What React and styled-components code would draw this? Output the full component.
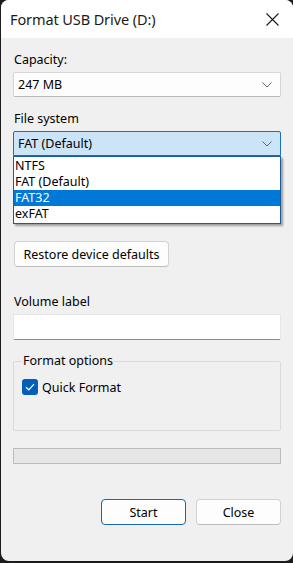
import React from "react";
import styled, { createGlobalStyle } from "styled-components";

const Global = createGlobalStyle`
  html, body { margin: 0; padding: 0; background: #202020; }
  body { font-family: "Noto Sans", "Segoe UI", sans-serif; font-size: 12.5px; color: #000; }
  * { box-sizing: border-box; }
`;

const Screen = styled.div`
  width: 293px;
  height: 563px;
  padding: 0 0 2px 1px;
  background: #1c1c1c;
  overflow: hidden;
`;

const Window = styled.div`
  width: 292px;
  height: 561px;
  background: #f0f0f0;
  border-radius: 8px;
  overflow: hidden;
  display: flex;
  flex-direction: column;
`;

const TitleBar = styled.div`
  height: 38px;
  flex: none;
  background: #fff;
  display: flex;
  align-items: center;
  justify-content: space-between;
  padding: 0 14px 0 9px;
`;

const Title = styled.div`
  font-size: 14.5px;
  letter-spacing: -0.1px;
  color: #1a1a1a;
`;

const Body = styled.div`
  flex: 1;
  display: flex;
  flex-direction: column;
  padding: 13px 12px 0 12px;
`;

const Label = styled.div`
  height: 18px;
  line-height: 18px;
  margin-bottom: ${(p) => p.$mb || 4}px;
  padding-left: 1px;
`;

const ComboWrap = styled.div`
  position: relative;
  margin-bottom: ${(p) => p.$mb || 0}px;
`;

const Combo = styled.div`
  height: 25px;
  display: flex;
  align-items: center;
  justify-content: space-between;
  padding: 0 8px 0 4px;
  background: ${(p) => (p.$active ? "#cce4f7" : "#fdfdfd")};
  border: 1px solid ${(p) => (p.$active ? "#1a6fba" : "#d6d6d6")};
  border-bottom-color: ${(p) => (p.$active ? "#1a6fba" : "#b8b8b8")};
  border-radius: ${(p) => (p.$active ? "2px 2px 0 0" : "2px")};
`;

const List = styled.div`
  position: absolute;
  left: 0;
  right: 0;
  top: 100%;
  background: #fff;
  border: 1px solid #1a5d9c;
  box-shadow: 2px 2px 2px rgba(0, 0, 0, 0.35);
  padding: 1px 0;
  z-index: 2;
`;

const Item = styled.div`
  height: 16px;
  line-height: 16px;
  padding-left: 1px;
  background: ${(p) => (p.$selected ? "#0078d7" : "transparent")};
  color: ${(p) => (p.$selected ? "#fff" : "#000")};
`;

const Button = styled.button`
  font: inherit;
  height: 26px;
  width: ${(p) => p.$w}px;
  background: #fdfdfd;
  border: 1px solid ${(p) => (p.$primary ? "#1667b4" : "#d2d2d2")};
  border-bottom-color: ${(p) => (p.$primary ? "#1667b4" : "#bdbdbd")};
  border-radius: 4px;
  color: #000;
  padding: 0;
`;

const RestoreRow = styled.div`
  display: flex;
  padding-left: 1px;
  margin-top: 85px;
  margin-bottom: 26px;
`;

const Input = styled.div`
  height: 26px;
  background: #fff;
  border: 1px solid #e6e6e6;
  border-bottom: 1px solid #8a8a8a;
  border-radius: 2px;
  margin-bottom: 13px;
`;

const Group = styled.fieldset`
  margin: 0;
  padding: 10px 8px 0 8px;
  height: 78px;
  border: 1px solid #dadada;
  border-radius: 2px;
`;

const Legend = styled.legend`
  padding: 0 1px;
  margin-left: 0;
  line-height: 16px;
`;

const CheckRow = styled.div`
  display: flex;
  align-items: center;
  gap: 4px;
  height: 16px;
`;

const CheckBox = styled.span`
  width: 16px;
  height: 16px;
  background: #005fb8;
  border-radius: 3px;
  display: flex;
  align-items: center;
  justify-content: center;
`;

const Progress = styled.div`
  height: 16px;
  background: #e6e6e6;
  border: 1px solid #bcbcbc;
  margin-top: 17px;
`;

const Footer = styled.div`
  display: flex;
  justify-content: flex-end;
  gap: 10px;
  margin-top: 35px;
`;

const Chevron = () => (
  <svg width="10" height="6" viewBox="0 0 10 6">
    <path d="M0.5 0.5 L5 5 L9.5 0.5" fill="none" stroke="#666" strokeWidth="1" />
  </svg>
);

const CloseIcon = () => (
  <svg width="13" height="13" viewBox="0 0 13 13">
    <path d="M0.5 0.5 L12.5 12.5 M12.5 0.5 L0.5 12.5" stroke="#1a1a1a" strokeWidth="1.1" />
  </svg>
);

const Check = () => (
  <svg width="10" height="8" viewBox="0 0 10 8">
    <path d="M1 4.2 L3.8 6.8 L9 1.2" fill="none" stroke="#fff" strokeWidth="1.2" />
  </svg>
);

export default function App() {
  const options = ["NTFS", "FAT (Default)", "FAT32", "exFAT"];
  return (
    <>
      <Global />
      <Screen>
        <Window>
          <TitleBar>
            <Title>Format USB Drive (D:)</Title>
            <CloseIcon />
          </TitleBar>
          <Body>
            <Label $mb={3}>Capacity:</Label>
            <ComboWrap $mb={13}>
              <Combo>
                <span>247 MB</span>
                <Chevron />
              </Combo>
            </ComboWrap>
            <Label $mb={3}>File system</Label>
            <ComboWrap>
              <Combo $active>
                <span>FAT (Default)</span>
                <Chevron />
              </Combo>
              <List>
                {options.map((o) => (
                  <Item key={o} $selected={o === "FAT32"}>
                    {o}
                  </Item>
                ))}
              </List>
            </ComboWrap>
            <RestoreRow>
              <Button $w={155}>Restore device defaults</Button>
            </RestoreRow>
            <Label $mb={3}>Volume label</Label>
            <Input />
            <Group>
              <Legend>Format options</Legend>
              <CheckRow>
                <CheckBox>
                  <Check />
                </CheckBox>
                <span>Quick Format</span>
              </CheckRow>
            </Group>
            <Progress />
            <Footer>
              <Button $primary $w={85}>Start</Button>
              <Button $w={85}>Close</Button>
            </Footer>
          </Body>
        </Window>
      </Screen>
    </>
  );
}
